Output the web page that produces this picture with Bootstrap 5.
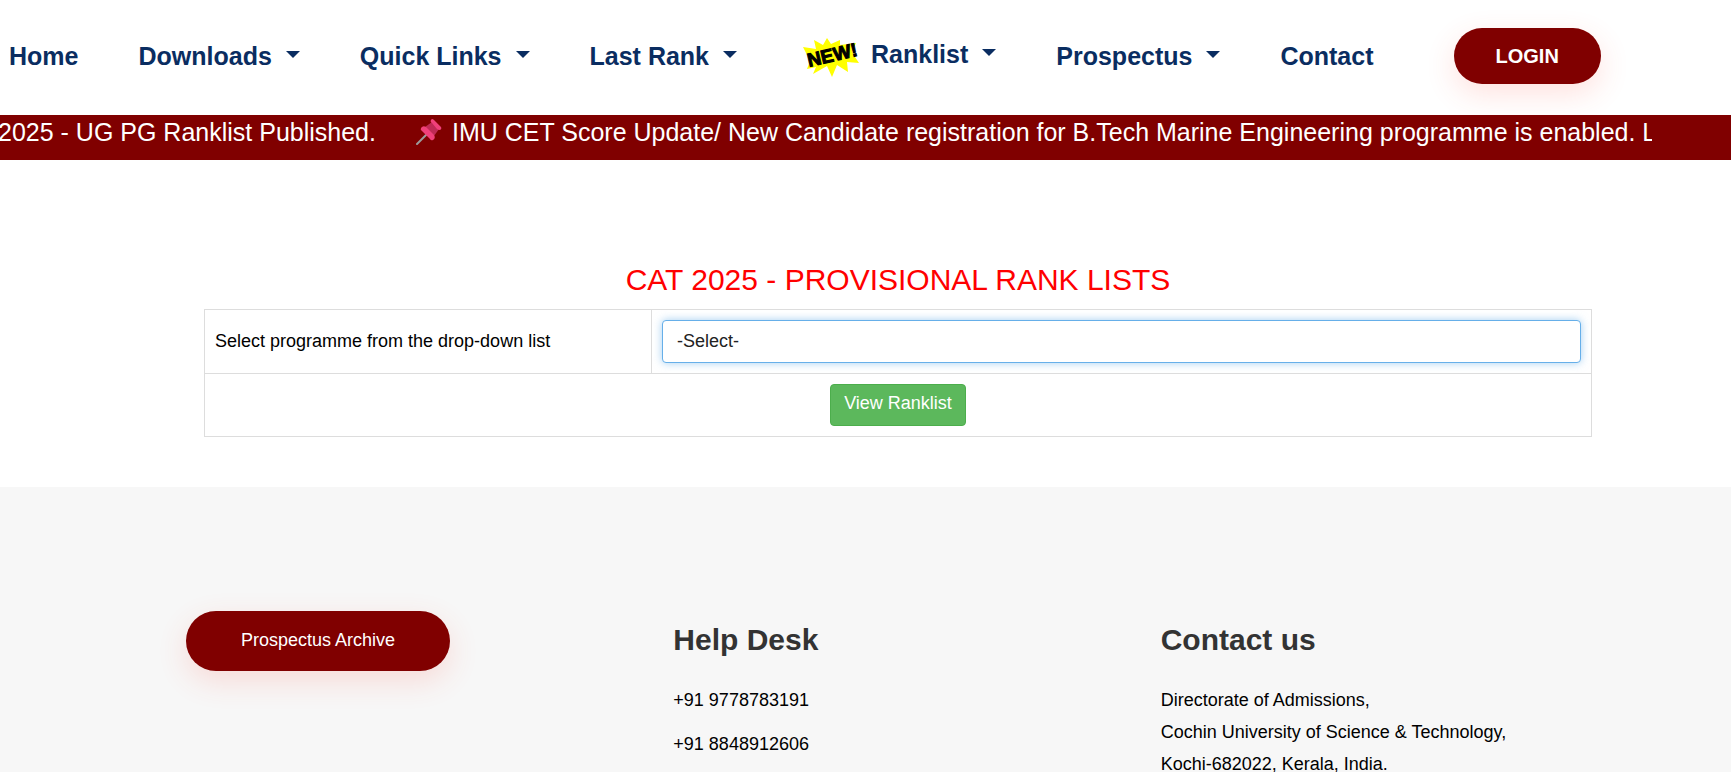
<!DOCTYPE html>
<html lang="en">
<head>
<meta charset="utf-8">
<meta name="viewport" content="width=device-width, initial-scale=1">
<title>CAT 2025 - Provisional Rank Lists</title>
<link href="https://cdn.jsdelivr.net/npm/bootstrap@5.3.0/dist/css/bootstrap.min.css" rel="stylesheet">
<style>
  :root { --maroon: #800000; --navy: #0a2d61; }
  body { font-family: "Liberation Sans", Arial, sans-serif; font-size: 18px; line-height: 32px; color: #000; overflow-x: hidden; }
  .site-nav { min-height: 115px; padding: 0 0 4px 9px; }
  .site-nav .navbar-nav { gap: 60px; }
  .site-nav .navbar-nav .nav-link { padding: 0; font-size: 25px; line-height: 38px; font-weight: 700; color: var(--navy); white-space: nowrap; }
  .site-nav .dropdown-toggle { display: flex; align-items: center; }
  .site-nav .dropdown-toggle::after { margin: 0 0 2px 14px; border-width: 7px 7px 0; border-color: var(--navy) transparent transparent; }
  .rank-item { padding-bottom: 4px; }
  .new-burst { width: 74px; height: 42px; overflow: visible; }
  .pill { background: var(--maroon); color: #fff; border: 0; border-radius: 30px; box-shadow: 0 10px 30px rgba(255, 74, 54, .16); }
  .pill:hover { background: #600000; color: #fff; }
  .pill-login { height: 56px; padding: 0 42px; margin-left: 20px; font-size: 20px; font-weight: 700; }
  .pill-archive { height: 60px; padding: 0 55px; font-size: 18px; line-height: 58px; }
  .ticker { height: 45px; background: var(--maroon); color: #fff; font-size: 25px; line-height: 34px; overflow: hidden; position: relative; }
  .ticker-track { margin: 0 79px 0 -2px; overflow: hidden; white-space: nowrap; }
  .pin { width: 26px; height: 26px; margin: 0 10px 0 40px; flex: none; }
  .rank-area { padding: 102px 139px 50px 204px; }
  .rank-title { font-size: 30px; line-height: 36px; color: #f00; margin: 0 0 11px; }
  .rank-table { margin: 0; border-color: #ddd; --bs-table-color: #000; }
  .rank-table td { padding: 10px; line-height: 22px; }
  .rank-table td:first-child:not([colspan]) { width: 447px; padding-bottom: 12px; }
  .programme { height: 43px; padding: 0 14px; font-size: 18px; color: #222; background-image: none; border: 1px solid #66afe9; border-radius: 4px; box-shadow: 0 0 8px rgba(102, 175, 233, .6); }
  .programme:focus { border-color: #66afe9; box-shadow: 0 0 8px rgba(102, 175, 233, .6); }
  .view-btn { height: 42px; padding: 0 13px 4px; font-size: 18px; line-height: 20px; color: #fff; background: #5cb85c; border: 1px solid #4cae4c; border-radius: 4px; }
  .site-foot { background: #f7f7f7; padding: 124px 95px 60px 186px; }
  .site-foot .row { margin-right: 0; }
  .site-foot h2 { font-size: 30px; line-height: 36px; font-weight: 700; color: #333; margin: 11px 0 26px; }
  .site-foot p { margin: 0 0 12px; }
  @media (max-width: 1200px) {
    .rank-area, .site-foot { padding-left: 24px; padding-right: 24px; }
    .rank-table td:first-child:not([colspan]) { width: 35%; }
    .site-nav .navbar-nav { flex-wrap: wrap; gap: 24px; }
  }
</style>
</head>
<body>
<header>
  <nav class="site-nav navbar navbar-expand bg-white" aria-label="Main">
    <ul class="navbar-nav align-items-center">
      <li class="nav-item"><a class="nav-link" href="#">Home</a></li>
      <li class="nav-item dropdown"><a class="nav-link dropdown-toggle" href="#" role="button">Downloads</a></li>
      <li class="nav-item dropdown"><a class="nav-link dropdown-toggle" href="#" role="button">Quick Links</a></li>
      <li class="nav-item dropdown"><a class="nav-link dropdown-toggle" href="#" role="button">Last Rank</a></li>
      <li class="nav-item dropdown rank-item d-flex align-items-center">
        <svg class="new-burst" viewBox="0 0 74 42" aria-hidden="true">
          <path fill="#ffff00" d="M6 14L19 16 17 7 26 12 30 5 34 11 43 7 43 12 59 10 55 18 58 24 62 30 50 29 51 39 40 32 35 44 30 33 16 41 19 34 10 36 13 28 10 22Z"/>
          <text x="12" y="34" transform="rotate(-13 12 34)" font-family="Liberation Sans, Arial, sans-serif" font-size="19" font-weight="700" fill="#000" stroke="#000" stroke-width="1">NEW!</text>
        </svg>
        <a class="nav-link dropdown-toggle" href="#" role="button">Ranklist</a>
      </li>
      <li class="nav-item dropdown"><a class="nav-link dropdown-toggle" href="#" role="button">Prospectus</a></li>
      <li class="nav-item"><a class="nav-link" href="#">Contact</a></li>
      <li class="nav-item"><button type="button" class="btn pill pill-login">LOGIN</button></li>
    </ul>
  </nav>
  <div class="ticker">
    <div class="ticker-track d-flex">
      <span>2025 - UG PG Ranklist Published.</span>
      <svg class="pin align-self-center" viewBox="0 0 26 26" aria-hidden="true">
        <path d="M10 16L1 25" stroke="#9b9b9b" stroke-width="2" stroke-linecap="round"/>
        <path fill="#c02a55" d="M9 8l7-5 7 7-5 7z"/>
        <path fill="#f0407a" d="M15 1q1-2 3 0l7 7q1 2-1 3-2 0-3-1l-5-6q-2-1-1-3z"/>
        <path fill="#f0407a" d="M5 9q2-3 5-1l8 8q2 3-1 5-2 1-3-1l-8-8q-2-1-1-3z"/>
      </svg>
      <span>IMU CET Score Update/ New Candidate registration for B.Tech Marine Engineering programme is enabled. L</span>
    </div>
  </div>
</header>
<main class="rank-area">
  <h1 class="rank-title text-center fw-normal">CAT 2025 - PROVISIONAL RANK LISTS</h1>
  <form>
    <table class="table table-bordered rank-table align-middle">
      <tbody>
        <tr>
          <td><label for="programme">Select programme from the drop-down list</label></td>
          <td><select id="programme" class="form-select programme"><option>-Select-</option></select></td>
        </tr>
        <tr>
          <td colspan="2" class="text-center"><button type="button" class="btn view-btn">View Ranklist</button></td>
        </tr>
      </tbody>
    </table>
  </form>
</main>
<footer class="site-foot">
  <div class="row gx-4">
    <div class="col-md-4"><a class="btn pill pill-archive py-0" href="#">Prospectus Archive</a></div>
    <div class="col-md-4">
      <h2>Help Desk</h2>
      <p>+91 9778783191</p>
      <p>+91 8848912606</p>
    </div>
    <div class="col-md-4">
      <h2>Contact us</h2>
      <address class="mb-0">Directorate of Admissions,<br>Cochin University of Science &amp; Technology,<br>Kochi-682022, Kerala, India.</address>
    </div>
  </div>
</footer>
<script src="https://cdn.jsdelivr.net/npm/bootstrap@5.3.0/dist/js/bootstrap.bundle.min.js"></script>
</body>
</html>
